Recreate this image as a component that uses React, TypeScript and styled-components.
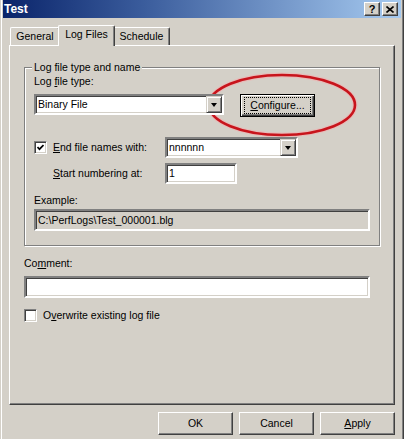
import React from "react";
import styled, { createGlobalStyle } from "styled-components";

const Global = createGlobalStyle`
  html, body { margin: 0; padding: 0; background: #d4d0c8; }
  body {
    font-family: "Liberation Sans", Arial, sans-serif;
    font-size: 10.5px;
    color: #000;
  }
  * { box-sizing: border-box; }
  u { text-decoration-thickness: 1px; text-underline-offset: 1px; }
`;

const Window = styled.div`
  position: relative;
  width: 404px;
  height: 439px;
  background: #d4d0c8;
  border-left: 1px solid #d4d0c8;
  border-right: 1px solid #404040;
  box-shadow: inset 1px 0 0 #fff, inset -1px 0 0 #808080;
  padding: 0 2px;
  display: flex;
  flex-direction: column;
  overflow: hidden;
`;

const TitleBar = styled.div`
  height: 18px;
  flex: none;
  display: flex;
  align-items: center;
  padding: 0 3px 0 1px;
  background: linear-gradient(to right, #0a246a 0%, #3a5c9c 35%, #a6caf0 100%);
  color: #fff;
  font-weight: bold;
  font-size: 12px;
`;

const TitleText = styled.span`
  flex: 1;
`;

const TitleButtons = styled.div`
  display: flex;
  gap: 2px;
`;

const TitleButton = styled.div`
  width: 16px;
  height: 14px;
  background: #d4d0c8;
  color: #000;
  border: 1px solid;
  border-color: #fff #404040 #404040 #fff;
  box-shadow: inset -1px -1px 0 #808080;
  display: flex;
  align-items: center;
  justify-content: center;
  font-size: 11px;
  font-weight: bold;
  line-height: 1;
`;

const Body = styled.div`
  flex: 1;
  display: flex;
  flex-direction: column;
  padding: 7px 6px 0 6px;
`;

const Tabs = styled.div`
  display: flex;
  align-items: flex-end;
  height: 20px;
  padding-left: 1px;
  position: relative;
  z-index: 2;
`;

const Tab = styled.div<{ $w: number; $active?: boolean }>`
  position: relative;
  z-index: ${(p) => (p.$active ? 3 : 1)};
  width: ${(p) => p.$w}px;
  height: ${(p) => (p.$active ? 21 : 18)}px;
  margin: ${(p) => (p.$active ? "0 -2px -1px -2px" : "0")};
  background: #d4d0c8;
  border-top: 1px solid #fff;
  border-left: 1px solid #fff;
  border-right: 1px solid #404040;
  border-radius: 2px 2px 0 0;
  box-shadow: inset -1px 0 0 #808080;
  text-align: center;
  line-height: 13px;
  padding-top: ${(p) => (p.$active ? 2 : 2)}px;
`;

const Panel = styled.div`
  position: relative;
  z-index: 1;
  height: 360px;
  border: 1px solid;
  border-color: #fff #404040 #404040 #fff;
  box-shadow: inset -1px -1px 0 #808080;
  padding: 0 14px;
  display: flex;
  flex-direction: column;
`;

const Group = styled.fieldset`
  margin: 15px 0 0 0;
  width: 356px;
  min-inline-size: 0;
  padding: 0 9px 14px 9px;
  border: 1px solid #808080;
  box-shadow: inset 1px 1px 0 #fff, 1px 1px 0 #fff;
  display: flex;
  flex-direction: column;
`;

const Legend = styled.legend`
  padding: 0 2px;
  margin-left: -2px;
  line-height: 12px;
  background: #d4d0c8;
`;

const Label = styled.div<{ $mt?: number; $pl?: number }>`
  line-height: 13px;
  margin-top: ${(p) => p.$mt ?? 0}px;
  padding-left: ${(p) => p.$pl ?? 0}px;
  white-space: nowrap;
`;

const Row = styled.div<{ $mt?: number; $gap?: number }>`
  display: flex;
  align-items: flex-start;
  gap: ${(p) => p.$gap ?? 0}px;
  margin-top: ${(p) => p.$mt ?? 0}px;
`;

const CheckRow = styled.div<{ $mt?: number }>`
  display: flex;
  align-items: center;
  gap: 6px;
  margin-top: ${(p) => p.$mt ?? 0}px;
  line-height: 13px;
`;

const FormGrid = styled.div`
  display: grid;
  grid-template-columns: 131px auto;
  row-gap: 5px;
  align-items: center;
  margin-top: 20px;
`;

const Sunken = styled.div<{ $w: number; $h: number; $disabled?: boolean }>`
  width: ${(p) => p.$w}px;
  height: ${(p) => p.$h}px;
  background: ${(p) => (p.$disabled ? "#d4d0c8" : "#fff")};
  border: 2px solid;
  border-color: #808080 #fff #fff #808080;
  box-shadow: inset 1px 1px 0 #404040, inset -1px -1px 0 #d4d0c8;
  display: flex;
  align-items: center;
  padding-left: 2px;
  white-space: nowrap;
`;

const FieldText = styled.span`
  flex: 1;
  line-height: 13px;
`;

const DropButton = styled.div`
  width: 16px;
  height: 17px;
  flex: none;
  background: #d4d0c8;
  border: 1px solid;
  border-color: #d4d0c8 #404040 #404040 #d4d0c8;
  box-shadow: inset 1px 1px 0 #fff, inset -1px -1px 0 #808080;
  display: flex;
  align-items: center;
  justify-content: center;
`;

const Arrow = styled.div`
  width: 0;
  height: 0;
  border-left: 3.5px solid transparent;
  border-right: 3.5px solid transparent;
  border-top: 4px solid #000;
  margin-top: 1px;
`;

const CheckBox = styled.div`
  width: 13px;
  height: 13px;
  flex: none;
  background: #fff;
  border: 1px solid;
  border-color: #808080 #fff #fff #808080;
  box-shadow: inset 1px 1px 0 #404040, inset -1px -1px 0 #d4d0c8;
  display: flex;
  align-items: center;
  justify-content: center;
`;

const Button = styled.div<{ $default?: boolean }>`
  width: 75px;
  height: 23px;
  flex: none;
  background: #d4d0c8;
  display: flex;
  align-items: center;
  justify-content: center;
  line-height: 13px;
  ${(p) =>
    p.$default
      ? `border: 1px solid #000;
         box-shadow: inset 1px 1px 0 #fff, inset -1px -1px 0 #404040, inset -2px -2px 0 #808080;`
      : `border: 1px solid;
         border-color: #fff #404040 #404040 #fff;
         box-shadow: inset -1px -1px 0 #808080;`}
`;

const Focus = styled.span`
  outline: 1px dotted #000;
  outline-offset: 0;
  padding: 1px 2px;
  margin: 0;
  display: flex;
  align-items: center;
  justify-content: center;
  width: 65px;
  height: 15px;
`;

const ButtonRow = styled.div`
  display: flex;
  justify-content: flex-end;
  gap: 6px;
  margin-top: 7px;
`;

const Ellipse = styled.svg`
  position: absolute;
  left: 205px;
  top: 71px;
  width: 152px;
  height: 68px;
  pointer-events: none;
  overflow: visible;
`;

export default function App() {
  return (
    <>
      <Global />
      <Window>
        <TitleBar>
          <TitleText>Test</TitleText>
          <TitleButtons>
            <TitleButton>?</TitleButton>
            <TitleButton>
              <svg width="8" height="7" viewBox="0 0 8 7">
                <path d="M0.5 0.5 L7.5 6.5 M7.5 0.5 L0.5 6.5" stroke="#000" strokeWidth="1.6" />
              </svg>
            </TitleButton>
          </TitleButtons>
        </TitleBar>
        <Body>
          <Tabs>
            <Tab $w={50}>General</Tab>
            <Tab $w={57} $active>
              Log Files
            </Tab>
            <Tab $w={57}>Schedule</Tab>
          </Tabs>
          <Panel>
            <Group>
              <Legend>Log file type and name</Legend>
              <Label $mt={2}>
                Log <u>f</u>ile type:
              </Label>
              <Row $mt={6} $gap={16}>
                <Sunken $w={190} $h={21}>
                  <FieldText>Binary File</FieldText>
                  <DropButton>
                    <Arrow />
                  </DropButton>
                </Sunken>
                <Button $default>
                  <Focus>
                    <span>
                      <u>C</u>onfigure...
                    </span>
                  </Focus>
                </Button>
              </Row>
              <FormGrid>
                <CheckRow>
                  <CheckBox>
                    <svg width="7" height="7" viewBox="0 0 7 7">
                      <path d="M0.5 3 L2.5 5.2 L6.5 1" stroke="#000" strokeWidth="1.7" fill="none" />
                    </svg>
                  </CheckBox>
                  <span>
                    <u>E</u>nd file names with:
                  </span>
                </CheckRow>
                <Sunken $w={133} $h={21}>
                  <FieldText>nnnnnn</FieldText>
                  <DropButton>
                    <Arrow />
                  </DropButton>
                </Sunken>
                <Label $pl={19}>
                  <u>S</u>tart numbering at:
                </Label>
                <Sunken $w={72} $h={21}>
                  <FieldText>1</FieldText>
                </Sunken>
              </FormGrid>
              <Label $mt={10}>Example:</Label>
              <Row $mt={2}>
                <Sunken $w={336} $h={22} $disabled>
                  <FieldText>C:\PerfLogs\Test_000001.blg</FieldText>
                </Sunken>
              </Row>
            </Group>
            <Label $mt={11}>
              Co<u>m</u>ment:
            </Label>
            <Row $mt={6}>
              <Sunken $w={346} $h={22} />
            </Row>
            <CheckRow $mt={11}>
              <CheckBox />
              <span>
                O<u>v</u>erwrite existing log file
              </span>
            </CheckRow>
          </Panel>
          <ButtonRow>
            <Button>OK</Button>
            <Button>Cancel</Button>
            <Button>
              <span>
                <u>A</u>pply
              </span>
            </Button>
          </ButtonRow>
        </Body>
        <Ellipse viewBox="0 0 152 68">
          <ellipse cx="76" cy="34" rx="73" ry="30" fill="none" stroke="#f2b0b0" strokeWidth="5" opacity="0.6" />
          <ellipse cx="76" cy="34" rx="73" ry="30" fill="none" stroke="#c8141c" strokeWidth="2.6" />
        </Ellipse>
      </Window>
    </>
  );
}
